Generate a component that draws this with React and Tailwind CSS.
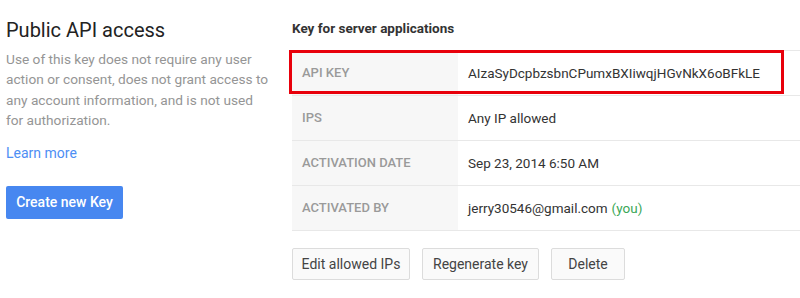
import React from 'react';

const rows = [
  { label: 'API KEY', value: 'AIzaSyDcpbzsbnCPumxBXIiwqjHGvNkX6oBFkLE' },
  { label: 'IPS', value: 'Any IP allowed' },
  { label: 'ACTIVATION DATE', value: 'Sep 23, 2014 6:50 AM' },
  { label: 'ACTIVATED BY', value: 'jerry30546@gmail.com', you: true },
];

function KeyTable() {
  return (
    <div className="relative border-t border-[#e8e8e8]">
      {rows.map((row) => (
        <div key={row.label} className="flex h-[45px] border-b border-[#e8e8e8]">
          <div className="w-[166px] shrink-0 bg-[#f7f7f7] px-[10px] flex items-center text-[13px] font-medium text-[#9a9a9a]">
            {row.label}
          </div>
          <div className="flex-1 px-[10px] flex items-center text-[13.5px] text-[#333]">
            {row.value}
            {row.you && <span className="ml-1 text-[#3aa757]">(you)</span>}
          </div>
        </div>
      ))}
      {/* highlight around the key row */}
      <div className="absolute left-[-3px] top-[-1px] w-[495px] h-[44px] border-[3px] border-[#e8000b] pointer-events-none" />
    </div>
  );
}

export default function App() {
  return (
    <div className="w-[800px] h-[298px] bg-white flex overflow-hidden font-['Roboto',sans-serif]">
      {/* Left: description */}
      <div className="w-[286px] shrink-0 pl-[6px] pt-[16px]">
        <h2 className="text-[20px] leading-[28px] text-[#222]">Public API access</h2>
        <p className="mt-[5px] w-[266px] text-[13.7px] leading-[20.3px] text-[#959595]">
          Use of this key does not require any user action or consent, does not grant access to any account information, and is not used for authorization.
        </p>
        <a href="#" className="block mt-[13px] text-[14px] leading-[20px] text-[#4d8ef4]">Learn more</a>
        <button className="mt-[23px] w-[117px] h-[33px] rounded-[2px] bg-[#4787f0] text-white text-[14px] font-medium">
          Create new Key
        </button>
      </div>

      {/* Right: key details */}
      <div className="flex-1 pl-[6px] pt-[18px]">
        <h3 className="text-[13.5px] leading-[20px] font-bold text-[#333] mb-[12px]">Key for server applications</h3>
        <div className="mr-[-20px]">
          <KeyTable />
        </div>
        <div className="flex gap-3 mt-[17px]">
          <button className="w-[118px] h-[32px] rounded-[2px] border border-[#dcdcdc] bg-[#fafafa] text-[14px] text-[#444]">Edit allowed IPs</button>
          <button className="w-[117px] h-[32px] rounded-[2px] border border-[#dcdcdc] bg-[#fafafa] text-[14px] text-[#444]">Regenerate key</button>
          <button className="w-[74px] h-[32px] rounded-[2px] border border-[#dcdcdc] bg-[#fafafa] text-[14px] text-[#444]">Delete</button>
        </div>
      </div>
    </div>
  );
}
